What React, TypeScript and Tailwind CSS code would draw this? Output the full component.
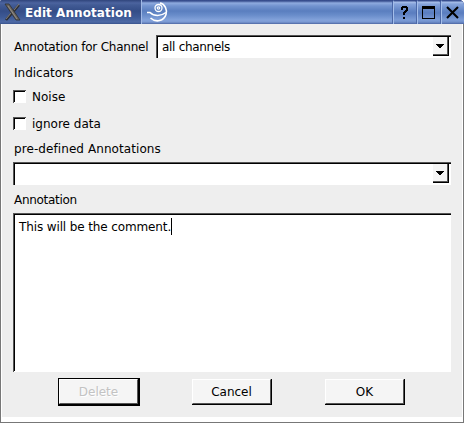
import React from "react";

function Combo({ className, value }: { className: string; value?: string }) {
  return (
    <div className={`flex h-[23px] shrink-0 bg-white ${className}`}>
      <div className="flex h-[23px] w-full border-t border-l border-[#555555]">
        <div className="flex h-[22px] w-full border-t border-l border-black bg-white">
          <span className="flex-1 pt-[1px] pl-[4px] leading-[18px] tracking-[-0.3px] whitespace-pre">{value}</span>
          <div className="mr-[2px] flex h-[19px] w-4 border-r border-b border-black bg-[#f5f5f5]">
            <div className="flex h-full w-full items-center justify-center border-r border-b border-[#555555]">
              <svg className="mt-[1px]" width="8" height="4" viewBox="0 0 8 4" shapeRendering="crispEdges">
                <path d="M0 0H8V1H7V2H6V3H5V4H3V3H2V2H1V1H0Z" fill="#000" />
              </svg>
            </div>
          </div>
        </div>
      </div>
    </div>
  );
}

function Check({ label }: { label: string }) {
  return (
    <div className="flex h-[13px] items-center">
      <div className="h-[13px] w-[13px] border-t border-l border-[#555555] bg-white">
        <div className="h-[11px] w-[11px] border-t border-l border-black" />
      </div>
      <span className="ml-[6px] leading-[14px]">{label}</span>
    </div>
  );
}

function DialogButton({ label }: { label: string }) {
  return (
    <button className="h-[26px] w-[80px] border-r border-b border-black bg-[#f5f5f5]">
      <span className="flex h-full w-full items-center justify-center border border-t-white border-r-[#555555] border-b-[#555555] border-l-white pt-[1px]">
        {label}
      </span>
    </button>
  );
}

function TitleButton({ children }: { children: React.ReactNode }) {
  return (
    <div className="h-6 w-6 bg-[#34498a]">
      <div className="h-6 w-6 overflow-hidden rounded-t-[3px] border-l border-[#4b68a8] bg-[linear-gradient(#34498a_0px,#3b5291_1px,#a9c0ea_2px,#86a4db_4px,#5f82c3_11px,#5a7dbf_13px,#7c9cd6_20px,#6f8fca_22px,#4c66a3_24px)]">
        <div className="h-6 border-l border-[#a4bee9]">{children}</div>
      </div>
    </div>
  );
}

export default function App() {
  return (
    <div className="flex h-[423px] w-[464px] flex-col overflow-hidden bg-white font-['DejaVu_Sans',sans-serif] text-[12px] text-black">
      <header className="flex h-6 shrink-0 overflow-hidden rounded-tl-[2px] rounded-tr-[5px] bg-[linear-gradient(#34498a_0px,#3b5291_1px,#8fabdf_3px,#7293cf_6px,#5a7ebf_11px,#688cca_15px,#83a2da_20px,#7b9ad3_22px,#4c66a3_24px)]">
        <div className="flex w-[141px] items-center bg-[linear-gradient(#30457c,#4c649f_3px,#425b95_5px,#344d87_11px,#3d5995_17px,#4e6aa6_22px,#38528d)]">
          <svg className="ml-1 w-[17px]" width="17" height="18" viewBox="0 0 17 18" fill="none">
            <path d="M2 17L8 10L15 2" stroke="#2b2c31" strokeWidth="2.6" />
            <path d="M2 16L7 10M10 7L15 1" stroke="#7e7b79" strokeWidth="1.1" />
            <path d="M1 1H5L16 17H12Z" fill="#68645f" stroke="#2f3034" strokeWidth=".8" />
            <path d="M4 3L13 16" stroke="#928d86" strokeWidth="1" />
          </svg>
          <h1 className="ml-[4px] pt-[1px] text-[12px] leading-4 font-bold tracking-[0.06px] whitespace-nowrap text-white">Edit Annotation</h1>
        </div>
        <div className="flex-1 border-l border-[#a1b9e5]">
          <svg className="ml-[5px]" width="22" height="24" viewBox="0 0 22 24" fill="none" stroke="#fff">
            <circle cx="11.5" cy="8" r="3.5" strokeWidth="1.3" />
            <circle cx="11.5" cy="8" r="1.2" strokeWidth="1.2" />
            <path d="M13 3C18 4 20.5 10 19 14.5C17 21 9 23 3.5 18" strokeWidth="1.6" />
            <path d="M0 12.5H3C7 16.5 14 16.5 19 12.5" strokeWidth="1.6" />
          </svg>
        </div>
        <TitleButton>
          <svg width="22" height="24" viewBox="0 0 22 24" shapeRendering="crispEdges">
            <path d="M8 6H13V7H14V11H13V12H12V13H11V15H9V12H10V11H11V10H12V8H9V10H7V7H8ZM9 17H11V19H9Z" fill="#000" />
          </svg>
        </TitleButton>
        <TitleButton>
          <svg width="22" height="24" viewBox="0 0 22 24" shapeRendering="crispEdges">
            <path fillRule="evenodd" d="M4 6H17V19H4ZM5 9V18H16V9Z" fill="#000" />
          </svg>
        </TitleButton>
        <TitleButton>
          <svg width="22" height="24" viewBox="0 0 22 24">
            <path d="M5 7L16 18M16 7L5 18" stroke="#000" strokeWidth="2.1" />
          </svg>
        </TitleButton>
      </header>
      <div className="flex h-[399px] border-r border-b border-l border-[#777777] bg-white pr-[1px] pb-[5px] pl-[1px]">
        <main className="flex w-full flex-col bg-[#eeeeee] pl-[11px]">
          <div className="mt-[11px] flex h-[23px] items-center">
            <label className="w-[143px] pl-[1px] tracking-[-0.22px] whitespace-nowrap">Annotation for Channel</label>
            <Combo className="w-[295px]" value="all channels" />
          </div>
          <div className="mt-[8px] h-[14px] pl-[1px] leading-[14px]">Indicators</div>
          <div className="mt-[10px]"><Check label="Noise" /></div>
          <div className="mt-[14px]"><Check label="ignore data" /></div>
          <div className="mt-[12px] h-[14px] pl-[1px] leading-[14px] tracking-[0.08px]">pre-defined Annotations</div>
          <Combo className="mt-[6px] w-[438px]" />
          <div className="mt-[8px] h-[14px] pl-[1px] leading-[14px] tracking-[-0.3px]">Annotation</div>
          <div className="mt-[6px] h-[159px] w-[438px] border-t border-l border-[#555555] bg-white">
            <div className="flex h-[157px] w-full border-t border-l border-black pt-[2px] pl-[4px]">
              <span className="leading-[20px] tracking-[-0.12px]">This will be the comment.</span>
              <div className="mt-[1px] h-[17px] w-px bg-black" />
            </div>
          </div>
          <div className="mt-[6px] flex h-[28px] items-center pl-[45px]">
            <button disabled className="h-[28px] w-[82px] border-t border-r-2 border-b-2 border-l border-black bg-[#f5f5f5]">
              <span className="flex h-full w-full items-center justify-center border border-t-white border-r-[#555555] border-b-[#555555] border-l-white pt-[1px] text-[#c3c3c3] [text-shadow:1px_1px_0_#fff]">
                Delete
              </span>
            </button>
            <div className="ml-[52px] flex gap-[53px]">
              <DialogButton label="Cancel" />
              <DialogButton label="OK" />
            </div>
          </div>
        </main>
      </div>
    </div>
  );
}
